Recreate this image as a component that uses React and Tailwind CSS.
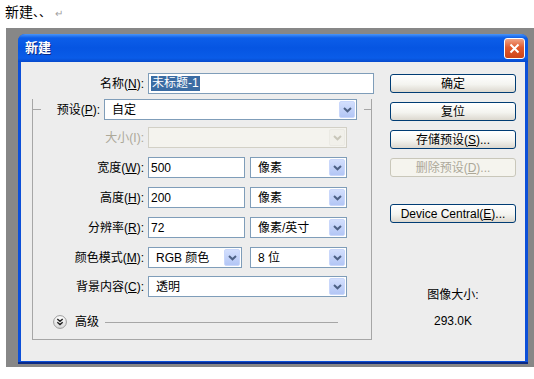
import React from 'react';

function Arrow({ disabled }) {
  return (
    <div
      className={`w-[16px] h-full flex items-center justify-center rounded-[2px] border ${
        disabled
          ? 'border-[#ebeae4] bg-[#f1f0ea]'
          : 'border-[#c9d7fb] bg-[linear-gradient(to_bottom,#d3dffd,#b3c6f5)]'
      }`}
    >
      <svg width="9" height="6" viewBox="0 0 9 6">
        <path
          d="M1 1 L4.5 4.3 L8 1"
          fill="none"
          stroke={disabled ? '#c9c7ba' : '#4d6185'}
          strokeWidth="2"
        />
      </svg>
    </div>
  );
}

function Combo({ className, value, disabled }) {
  return (
    <div
      className={`${className} h-[21px] flex items-center border p-px ${
        disabled ? 'border-[#d2d0c6] bg-[#f4f3ee]' : 'border-[#7f9db9] bg-white'
      }`}
    >
      <span className="flex-1 pl-[6px] leading-none">{value}</span>
      <Arrow disabled={disabled} />
    </div>
  );
}

function Field({ className, children }) {
  return (
    <div className={`${className} h-[21px] flex items-center border border-[#7f9db9] bg-white pl-[2px]`}>
      {children}
    </div>
  );
}

function Btn({ children, disabled, className = '' }) {
  return (
    <div
      className={`h-[19px] rounded-[3px] border flex items-center justify-center leading-none ${
        disabled
          ? 'border-[#c9c7ba] text-[#aca899] bg-[#f5f4ee]'
          : 'border-[#003c74] text-black bg-[linear-gradient(to_bottom,#ffffff,#f4f4f0_55%,#dcd8cf)]'
      } ${className}`}
    >
      {children}
    </div>
  );
}

function Row({ label, disabled, children, className = '' }) {
  return (
    <div className={`h-[21px] flex items-center gap-[4px] ${className}`}>
      <span className={`w-[111px] text-right ${disabled ? 'text-[#aca899]' : ''}`}>{label}</span>
      {children}
    </div>
  );
}

export default function App() {
  return (
    <div className="w-[534px] h-[379px] bg-white overflow-hidden text-[12px] text-black font-[family-name:Liberation_Sans,Noto_Sans_CJK_SC,sans-serif]">
      {/* page text above the screenshot */}
      <div className="h-[28px] pl-[5px] pt-[3px] text-[14px] leading-[18px]">
        新建<span className="text-[12px]">、、</span>
        <span className="ml-[4px] text-[10px] text-[#a0a0a0]">↵</span>
      </div>

      {/* gray backdrop */}
      <div className="ml-[6px] h-[339px] bg-[#878787] pt-[6px] pl-[12px]">
        {/* dialog window */}
        <div className="w-[510px] h-[330px] flex flex-col rounded-t-[7px] bg-[#0c4fd8] border-b-2 border-[#0a2a86]">
          {/* title bar */}
          <div className="h-[28px] shrink-0 flex items-center justify-between pl-[7px] pr-[3px] rounded-t-[7px] bg-[linear-gradient(to_bottom,#4a95f8_0%,#0c5ee9_14%,#0655e2_50%,#0a5ce8_86%,#0649cc_100%)]">
            <span className="text-white font-bold text-[13px] [text-shadow:1px_1px_0_#0a2a86]">新建</span>
            <div className="w-[21px] h-[21px] rounded-[3px] border border-white bg-[linear-gradient(to_bottom,#f0a385,#e25a2e_45%,#cd4418)] flex items-center justify-center">
              <svg width="11" height="11" viewBox="0 0 11 11">
                <path d="M1.5 1.5 L9.5 9.5 M9.5 1.5 L1.5 9.5" stroke="#fff" strokeWidth="2" />
              </svg>
            </div>
          </div>

          {/* content */}
          <div className="flex-1 mx-[3px] mb-px bg-[#ededed] flex">
            {/* left column */}
            <div className="w-[353px] pt-[11px]">
              <div className="h-[21px] flex items-center gap-[4px]">
                <span className="w-[123px] text-right">名称(<u>N</u>):</span>
                <Field className="w-[226px]">
                  <span className="bg-[#3b6ca3] text-white leading-[15px] px-px">未标题-1</span>
                </Field>
              </div>

              {/* group box */}
              <div className="mt-[15px] ml-[11px] w-[340px] h-[241px] border-x border-b border-[#a6a6a6]">
                <div className="-mt-[10px] h-[21px] flex items-center">
                  <div className="w-[8px] h-px bg-[#a6a6a6]" />
                  <span className="flex-1 text-right pr-[4px]">预设(<u>P</u>):</span>
                  <Combo className="w-[253px]" value="自定" />
                  <div className="ml-[7px] w-[7px] h-px bg-[#a6a6a6]" />
                </div>

                <Row label="大小(I):" disabled className="mt-[7px]">
                  <Combo className="w-[199px]" value="" disabled />
                </Row>
                <Row label={<>宽度(<u>W</u>):</>} className="mt-[9px]">
                  <Field className="w-[97px]">500</Field>
                  <Combo className="ml-[1px] w-[97px]" value="像素" />
                </Row>
                <Row label={<>高度(<u>H</u>):</>} className="mt-[9px]">
                  <Field className="w-[97px]">200</Field>
                  <Combo className="ml-[1px] w-[97px]" value="像素" />
                </Row>
                <Row label={<>分辨率(<u>R</u>):</>} className="mt-[9px]">
                  <Field className="w-[97px]">72</Field>
                  <Combo className="ml-[1px] w-[97px]" value="像素/英寸" />
                </Row>
                <Row label={<>颜色模式(<u>M</u>):</>} className="mt-[9px]">
                  <Combo className="w-[94px]" value="RGB 颜色" />
                  <Combo className="ml-[4px] w-[97px]" value="8 位" />
                </Row>
                <Row label={<>背景内容(<u>C</u>):</>} className="mt-[8px]">
                  <Combo className="w-[199px]" value="透明" />
                </Row>

                {/* advanced */}
                <div className="mt-[17px] h-[16px] flex items-center pl-[20px]">
                  <svg width="14" height="14" viewBox="0 0 14 14">
                    <defs>
                      <linearGradient id="adv" x1="0" y1="0" x2="0" y2="1">
                        <stop offset="0" stopColor="#ffffff" />
                        <stop offset="1" stopColor="#d8d8d8" />
                      </linearGradient>
                    </defs>
                    <circle cx="7" cy="7" r="6.4" fill="url(#adv)" stroke="#9a9a9a" strokeWidth="1" />
                    <path d="M4.3 4 L7 6.3 L9.7 4 M4.3 7.3 L7 9.6 L9.7 7.3" fill="none" stroke="#222" strokeWidth="1.4" />
                  </svg>
                  <span className="ml-[8px]">高级</span>
                  <div className="ml-[6px] w-[233px] h-px bg-[#a6a6a6]" />
                </div>
              </div>
            </div>

            {/* right column */}
            <div className="ml-[16px] w-[126px] pt-[12px] flex flex-col">
              <Btn>确定</Btn>
              <Btn className="mt-[9px]">复位</Btn>
              <Btn className="mt-[9px]">存储预设(<u>S</u>)...</Btn>
              <Btn disabled className="mt-[9px]">删除预设(<u>D</u>)...</Btn>
              <Btn className="mt-[27px]">Device Central(<u>E</u>)...</Btn>
              <div className="mt-[64px] text-center leading-[16px]">图像大小:</div>
              <div className="mt-[10px] text-center leading-[16px]">293.0K</div>
            </div>
          </div>
        </div>
      </div>
    </div>
  );
}
